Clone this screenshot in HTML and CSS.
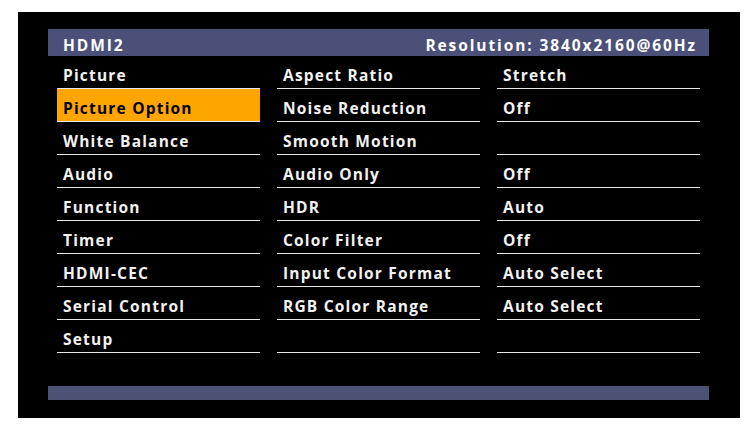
FILE: index.html
```html
<!DOCTYPE html>
<html>
<head>
<meta charset="utf-8">
<link rel="stylesheet" href="styles.css">
</head>
<body>
<div class="screen">
  <div class="header">
    <span>HDMI2</span>
    <span>Resolution: 3840x2160@60Hz</span>
  </div>
  <div class="grid">
    <div class="col">
      <div class="cell">Picture</div>
      <div class="cell selected">Picture Option</div>
      <div class="cell">White Balance</div>
      <div class="cell">Audio</div>
      <div class="cell">Function</div>
      <div class="cell">Timer</div>
      <div class="cell">HDMI-CEC</div>
      <div class="cell">Serial Control</div>
      <div class="cell">Setup</div>
      <div class="cell last"></div>
    </div>
    <div class="col">
      <div class="cell">Aspect Ratio</div>
      <div class="cell">Noise Reduction</div>
      <div class="cell">Smooth Motion</div>
      <div class="cell">Audio Only</div>
      <div class="cell">HDR</div>
      <div class="cell">Color Filter</div>
      <div class="cell">Input Color Format</div>
      <div class="cell">RGB Color Range</div>
      <div class="cell"></div>
      <div class="cell last"></div>
    </div>
    <div class="col">
      <div class="cell">Stretch</div>
      <div class="cell">Off</div>
      <div class="cell"></div>
      <div class="cell">Off</div>
      <div class="cell">Auto</div>
      <div class="cell">Off</div>
      <div class="cell">Auto Select</div>
      <div class="cell">Auto Select</div>
      <div class="cell"></div>
      <div class="cell last"></div>
    </div>
  </div>
  <div class="footer"></div>
</div>
</body>
</html>
```
FILE: styles.css
```css
html, body {
  margin: 0;
  padding: 0;
  background: #ffffff;
}
body {
  font-family: "Open Sans", "Noto Sans", sans-serif;
}
.screen {
  box-sizing: border-box;
  margin: 12px 0 0 18px;
  width: 722px;
  height: 406px;
  background: #000000;
  padding: 17px 31px 0 30px;
}
.header {
  box-sizing: border-box;
  height: 27px;
  background: #4a5078;
  color: #ffffff;
  display: flex;
  justify-content: space-between;
  padding: 5px 12px 0 15px;
  font-weight: 700;
  font-size: 15.5px;
  letter-spacing: 1.9px;
  line-height: 22px;
}
.grid {
  display: grid;
  grid-template-columns: repeat(3, 203px);
  column-gap: 17px;
  padding-left: 9px;
}
.cell {
  box-sizing: border-box;
  height: 33px;
  border-bottom: 1px solid #e8e8e8;
  padding: 6px 0 0 6px;
  line-height: 26px;
  font-size: 15.5px;
  font-weight: 700;
  letter-spacing: 1.2px;
  color: #f2f2f2;
  white-space: nowrap;
}
.cell.last {
  border-bottom-color: transparent;
}
.cell.selected {
  background: #ffa500;
  color: #000000;
}
.footer {
  height: 14px;
  background: #4b5274;
}
```
